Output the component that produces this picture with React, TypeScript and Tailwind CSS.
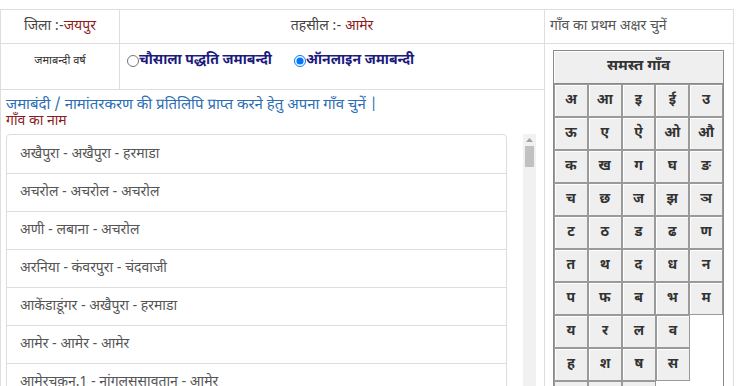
const FONT = { fontFamily: '"Noto Sans Devanagari", "Noto Sans", "Lohit Devanagari", sans-serif' };

const villages = [
  'अखैपुरा - अखैपुरा - हरमाडा',
  'अचरोल - अचरोल - अचरोल',
  'अणी - लबाना - अचरोल',
  'अरनिया - कंवरपुरा - चंदवाजी',
  'आकेंडाडूंगर - अखैपुरा - हरमाडा',
  'आमेर - आमेर - आमेर',
  'आमेरचक़न.1 - नांगलसुसावतान - आमेर',
];

const letterRows = [
  ['अ', 'आ', 'इ', 'ई', 'उ'],
  ['ऊ', 'ए', 'ऐ', 'ओ', 'औ'],
  ['क', 'ख', 'ग', 'घ', 'ङ'],
  ['च', 'छ', 'ज', 'झ', 'ञ'],
  ['ट', 'ठ', 'ड', 'ढ', 'ण'],
  ['त', 'थ', 'द', 'ध', 'न'],
  ['प', 'फ', 'ब', 'भ', 'म'],
  ['य', 'र', 'ल', 'व'],
  ['ह', 'श', 'ष', 'स'],
];

function LetterGrid() {
  return (
    <div className="w-[171px] border border-[#8a8a8a] bg-white">
      <div className="flex h-[33px] items-center justify-center border-b border-[#8a8a8a] bg-[#efefef] text-[15px] font-bold text-[#333] shadow-[inset_1px_1px_0_#fff]">
        समस्त गाँव
      </div>
      {letterRows.map((row, i) => (
        <div key={i} className="flex">
          {row.map((ch) => (
            <div
              key={ch}
              className="flex h-[33px] w-[34px] items-center justify-center border border-[#9a9a9a] bg-[#efefef] text-[14px] font-bold text-[#333] shadow-[inset_1px_1px_0_#fff]"
            >
              {ch}
            </div>
          ))}
        </div>
      ))}
      {/* next row, only its top edge shows */}
      <div className="flex">
        {[0, 1, 2].map((k) => (
          <div key={k} className="h-[33px] w-[34px] border border-[#9a9a9a] bg-[#efefef]" />
        ))}
      </div>
    </div>
  );
}

function FakeScrollbar() {
  return (
    <div className="flex w-[13px] flex-col items-center bg-[#f1f1f1] pt-[4px]">
      <svg width="7" height="4" viewBox="0 0 7 4" className="fill-[#a3a3a3]">
        <path d="M3.5 0 7 4H0z" />
      </svg>
      <div className="mt-[4px] h-[21px] w-[9px] bg-[#c1c1c1]" />
    </div>
  );
}

export default function App() {
  return (
    <div className="h-[386px] w-[744px] overflow-hidden bg-white pt-[9px]" style={FONT}>
      <table className="w-[734px] border-collapse text-[#444]">
        <tbody>
          <tr className="h-[34px]">
            <td className="w-[119px] border border-[#dedede] text-center text-[14px]">
              जिला :-<span className="text-[#8b1c1c]">जयपुर</span>
            </td>
            <td className="w-[425px] border border-[#dedede] text-center text-[14px]">
              तहसील :- <span className="text-[#8b1c1c]">आमेर</span>
            </td>
            <td className="border border-[#dedede] pl-[5px] text-[14px] text-[#555]">
              गाँव का प्रथम अक्षर चुनें
            </td>
          </tr>
          <tr className="h-[46px]">
            <td className="border border-[#dedede] pt-[9px] text-center align-top text-[11px] text-[#333]">
              जमाबन्दी वर्ष
            </td>
            <td className="border border-[#dedede] pl-[7px] pt-[6px] align-top">
              <div className="flex items-center gap-[22px] text-[14px] font-bold text-[#1c1a7d]">
                <label className="flex items-center">
                  <input type="radio" name="jb" className="m-0 h-[12px] w-[12px]" />
                  चौसाला पद्धति जमाबन्दी
                </label>
                <label className="flex items-center">
                  <input type="radio" name="jb" defaultChecked className="m-0 h-[12px] w-[12px]" />
                  ऑनलाइन जमाबन्दी
                </label>
              </div>
            </td>
            <td rowSpan={2} className="border border-[#dedede] pl-[8px] pt-[6px] align-top">
              <LetterGrid />
            </td>
          </tr>
          <tr>
            <td colSpan={2} className="border border-[#dedede] px-[5px] pt-[7px] align-top">
              <div className="text-[15px] leading-[17px] text-[#2d6db3]">
                जमाबंदी / नामांतरकरण की प्रतिलिपि प्राप्त करने हेतु अपना गाँव चुनें |
              </div>
              <div className="text-[14px] leading-[16px] text-[#8b1c1c]">गाँव का नाम</div>
              <div className="mt-[4px] flex h-[260px] gap-[16px]">
                <ul className="w-[501px] overflow-hidden rounded-t-[4px] border border-[#dddddd]">
                  {villages.map((v, i) => (
                    <li
                      key={v}
                      className={`flex h-[38px] items-center px-[13px] text-[14px] text-[#555] ${i > 0 ? 'border-t border-[#dddddd]' : ''}`}
                    >
                      {v}
                    </li>
                  ))}
                </ul>
                <FakeScrollbar />
              </div>
            </td>
          </tr>
        </tbody>
      </table>
    </div>
  );
}
